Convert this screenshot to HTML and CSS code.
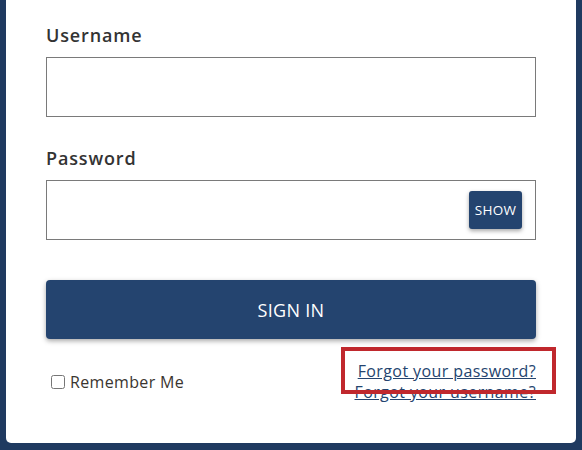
FILE: index.html
```html
<!DOCTYPE html>
<html>
<head>
<meta charset="utf-8">
<link rel="stylesheet" href="styles.css">
</head>
<body>
<div class="card">
  <form class="form">
    <label class="label" for="u">Username</label>
    <div class="field"><input id="u" class="input" type="text"></div>
    <label class="label pw" for="p">Password</label>
    <div class="field">
      <input id="p" class="input" type="password">
      <button type="button" class="show">SHOW</button>
    </div>
    <button type="button" class="signin">SIGN IN</button>
    <div class="bottom">
      <label class="remember"><input type="checkbox" class="check"> Remember Me</label>
      <div class="links">
        <a href="#" class="link">Forgot your password?</a>
        <a href="#" class="link">Forgot your username?</a>
        <span class="highlight"></span>
      </div>
    </div>
  </form>
</div>
</body>
</html>
```
FILE: styles.css
```css
html, body { margin: 0; padding: 0; }
body {
  background: #1f3a60;
  font-family: "Open Sans", "Liberation Sans", sans-serif;
  height: 450px;
  overflow: hidden;
}
.card {
  background: #fff;
  margin: 0 6px;
  height: 443px;
  border-radius: 0 0 5px 5px;
  box-sizing: border-box;
  padding: 23px 40px 0 40px;
}
.form { display: flex; flex-direction: column; }
.label {
  font-size: 18px;
  font-weight: 600;
  color: #333;
  line-height: 24px;
  margin-bottom: 10px;
  letter-spacing: 0.85px;
}
.label.pw { margin-top: 29px; }
.field { position: relative; display: flex; align-items: center; }
.input {
  width: 490px;
  height: 60px;
  box-sizing: border-box;
  border: 1px solid #7a7a7a;
  margin: 0;
  padding: 0 12px;
  font-size: 16px;
  outline: none;
}
.show {
  position: absolute;
  right: 14px;
  top: 11px;
  width: 53px;
  height: 38px;
  background: #24446f;
  color: #fff;
  border: none;
  border-radius: 3px;
  font-family: inherit;
  font-size: 13.5px;
  font-weight: 500;
  letter-spacing: 0.3px;
  padding: 0;
  box-shadow: 0 2px 4px rgba(0,0,0,0.35);
}
.signin {
  margin-top: 40px;
  width: 490px;
  height: 59px;
  background: #24446f;
  color: #fff;
  border: none;
  border-radius: 4px;
  font-family: inherit;
  font-size: 18px;
  font-weight: 500;
  letter-spacing: 0.3px;
  box-shadow: 0 2px 5px rgba(0,0,0,0.35);
  padding: 0;
}
.bottom {
  display: flex;
  justify-content: space-between;
  align-items: flex-start;
  margin-top: 22px;
  width: 490px;
}
.remember {
  display: flex;
  align-items: center;
  font-size: 16px;
  letter-spacing: 0.35px;
  color: #3a3530;
  margin-top: 10px;
  margin-left: 5px;
  gap: 5px;
}
.check { margin: 0; width: 14px; height: 14px; }
.links {
  position: relative;
  display: flex;
  flex-direction: column;
  align-items: flex-end;
}
.link {
  font-size: 16px;
  line-height: 21px;
  letter-spacing: 0.4px;
  color: #24446f;
  text-decoration: underline;
}
.highlight {
  position: absolute;
  left: -13px;
  right: -20px;
  top: -14px;
  height: 47px;
  box-sizing: border-box;
  border: 4px solid #c0282d;
}
```
